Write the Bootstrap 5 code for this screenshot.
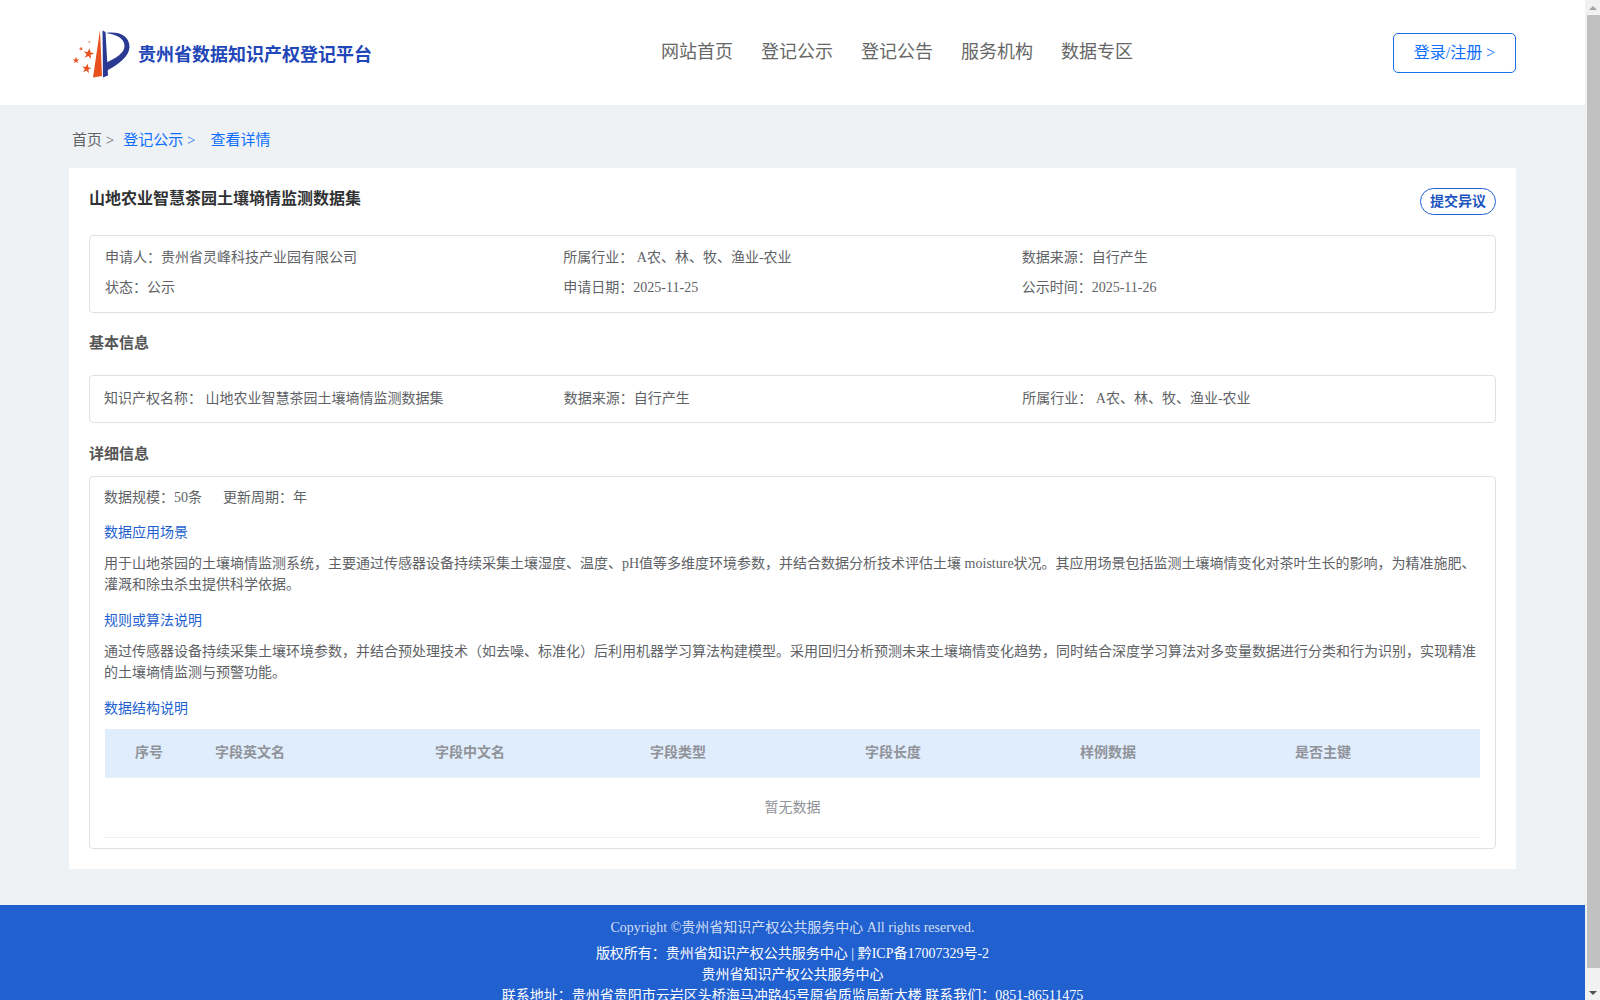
<!DOCTYPE html>
<html lang="zh-CN">
<head>
<meta charset="UTF-8" />
<title>贵州省数据知识产权登记平台</title>
<link href="https://cdn.jsdelivr.net/npm/bootstrap@5.3.3/dist/css/bootstrap.min.css" rel="stylesheet" />
<style>
  body {
    font-family: "Liberation Serif", "Noto Sans CJK SC", serif;
    font-size: 14px;
    color: #606266;
    background: #eff2f5;
    padding-right: 15px;
    height: 1000px;
    overflow: hidden;
  }
  .scroll-rail { position: fixed; top: 0; right: 0; bottom: 0; width: 15px; background: #f1f1f1; }
  .scroll-btn { height: 15px; }
  .scroll-up::before, .scroll-down::before { content: ""; border-left: 4px solid transparent; border-right: 4px solid transparent; }
  .scroll-up::before { border-bottom: 4px solid #a3a3a3; }
  .scroll-down::before { border-top: 4px solid #505050; }
  .scroll-thumb { height: 953px; margin-left: 2px; background: #c1c1c1; }
  .site-head { height: 105px; padding: 0 69px; background: #fff; }
  .site-logo { width: 595px; margin-left: -3px; }
  .site-logo span { margin-left: 2px; padding-top: 6px; font-size: 18px; font-weight: 700; color: #1f47b8; }
  .site-nav a { font-size: 18px; color: #666; text-decoration: none; line-height: 1; margin-top: -1px; }
  .site-nav { gap: 28px; }
  .login-btn {
    width: 123px; height: 40px; padding: 0;
    font-size: 16px; color: #0d6efd; background: #fff;
    border: 1px solid #1a6fe8; border-radius: 5px;
  }
  .page-wrap { padding: 0 69px 36px; }
  .crumbs { height: 63px; padding-left: 3px; padding-top: 7px; font-size: 15px; }
  .crumbs a { color: #0d6efd; text-decoration: none; }
  .crumbs .sep-a { margin-right: 9px; }
  .crumbs .sep-b { margin-right: 15px; }
  .detail-card { height: 701px; padding: 20px; background: #fff; }
  .detail-title { margin: 0; font-size: 16px; font-weight: 700; line-height: 22px; color: #303133; }
  .dispute-btn {
    width: 76px; height: 27px; padding: 0;
    font-size: 14px; font-weight: 700; color: #1d56c0; background: #fff;
    border: 1px solid #2060cf; border-radius: 14px;
  }
  .info-box { border: 1px solid #dfe1e5; border-radius: 4px; }
  .box-apply { height: 78px; margin-top: 20px; padding: 7px 15px; }
  .box-basic { height: 48px; padding: 8px 15px 8px 14px; }
  .box-basic .col-4 + .col-4 { padding-left: 1px; }
  .box-detail { height: 373px; padding: 9px 15px 0 14px; }
  .info-line { line-height: 30px; }
  .sect-title { margin: 0; font-size: 15px; font-weight: 700; color: #555; line-height: 22px; }
  .sect-basic { margin-top: 19px; margin-bottom: 21px; }
  .sect-detail { margin-top: 20px; margin-bottom: 11px; }
  .scale-line { line-height: 24px; }
  .scale-line span + span { margin-left: 21px; }
  .sub-title { margin: 0; font-size: 14px; font-weight: 400; line-height: 24px; color: #1d5fd0; }
  .sub-text { margin: 8px 0 14px; line-height: 21px; color: #606266; }
  .scale-line + .sub-title { margin-top: 11px; }
  .empty-table { margin: 8px 0 0 1px; table-layout: fixed; width: 1375px; }
  .empty-table th {
    width: 215px; height: 48px; padding: 0 0 0 25px; vertical-align: middle;
    font-size: 14px; font-weight: 700; color: #909399;
    background: #e0edfd; border-bottom: 1px solid #ebeef5;
  }
  .empty-table th:first-child { width: 85px; padding-left: 3px; text-align: center; }
  .empty-table th:nth-child(2) { width: 220px; }
  .empty-table th:last-child { width: 210px; }
  .empty-table td {
    height: 60px; padding: 0; text-align: center; vertical-align: middle;
    color: #909399; border-bottom: 1px solid #ebeef5;
  }
  .site-foot {
    margin-top: 0; padding: 12px 0 12px; background: #2160cf;
    color: #fff; text-align: center; line-height: 21px;
  }
  .site-foot .copy-line { margin-bottom: 5px; color: rgba(255, 255, 255, .8); }
</style>
</head>
<body>
  <header class="site-head d-flex align-items-center">
    <div class="site-logo d-flex align-items-center">
      <svg width="70" height="60" viewBox="0 0 70 60" aria-hidden="true">
        <defs>
          <path id="star" d="M0-1 .29-.31 .95-.31 .36.12 .59.81 0 .38-.59.81-.36.12-.95-.31-.29-.31Z" />
        </defs>
        <path d="M34 7 36 53 27 54.500Z" fill="#e8501e" />
        <path fill="#2a3a92" d="M36.500 7.500 39.500 9 42 52.500 37 54.500Z" />
        <path fill="#2a3a92" d="M40 10C52 8 63.500 12 63.500 24 63.500 33 52 42 41 47.500L40.500 39.500C50 35 58.500 30 58.500 23 58.500 15 50 11.500 40 10Z" />
        <g fill="#e8501e">
          <use href="#star" transform="translate(22.700 31) scale(5.500) rotate(10)" />
          <use href="#star" transform="translate(10 37.500) scale(3.500)" />
          <use href="#star" transform="translate(20.700 45.700) scale(5) rotate(10)" />
          <circle cx="15" cy="25.700" r="1.500" opacity=".8" />
          <circle cx="23.300" cy="19" r="1" opacity=".6" />
        </g>
      </svg>
      <span>贵州省数据知识产权登记平台</span>
    </div>
    <nav class="site-nav d-flex">
      <a href="#">网站首页</a>
      <a href="#">登记公示</a>
      <a href="#">登记公告</a>
      <a href="#">服务机构</a>
      <a href="#">数据专区</a>
    </nav>
    <button class="login-btn ms-auto" type="button">登录/注册 &gt;</button>
  </header>

  <main class="page-wrap">
    <div class="crumbs d-flex align-items-center">
      <span class="sep-a">首页 &gt;</span>
      <a class="sep-b" href="#">登记公示 &gt;</a>
      <a href="#">查看详情</a>
    </div>

    <section class="detail-card">
      <div class="d-flex justify-content-between align-items-start">
        <h1 class="detail-title">山地农业智慧茶园土壤墒情监测数据集</h1>
        <button class="dispute-btn" type="button">提交异议</button>
      </div>

      <div class="info-box box-apply">
        <div class="row g-0 info-line">
          <div class="col-4">申请人：贵州省灵峰科技产业园有限公司</div>
          <div class="col-4">所属行业： A农、林、牧、渔业-农业</div>
          <div class="col-4">数据来源：自行产生</div>
        </div>
        <div class="row g-0 info-line">
          <div class="col-4">状态：公示</div>
          <div class="col-4">申请日期：2025-11-25</div>
          <div class="col-4">公示时间：2025-11-26</div>
        </div>
      </div>

      <h2 class="sect-title sect-basic">基本信息</h2>
      <div class="info-box box-basic">
        <div class="row g-0 info-line">
          <div class="col-4">知识产权名称： 山地农业智慧茶园土壤墒情监测数据集</div>
          <div class="col-4">数据来源：自行产生</div>
          <div class="col-4">所属行业： A农、林、牧、渔业-农业</div>
        </div>
      </div>

      <h2 class="sect-title sect-detail">详细信息</h2>
      <div class="info-box box-detail">
        <div class="scale-line"><span>数据规模：50条</span><span>更新周期：年</span></div>
        <h3 class="sub-title">数据应用场景</h3>
        <p class="sub-text">用于山地茶园的土壤墒情监测系统，主要通过传感器设备持续采集土壤湿度、温度、pH值等多维度环境参数，并结合数据分析技术评估土壤 moisture状况。其应用场景包括监测土壤墒情变化对茶叶生长的影响，为精准施肥、灌溉和除虫杀虫提供科学依据。</p>
        <h3 class="sub-title">规则或算法说明</h3>
        <p class="sub-text">通过传感器设备持续采集土壤环境参数，并结合预处理技术（如去噪、标准化）后利用机器学习算法构建模型。采用回归分析预测未来土壤墒情变化趋势，同时结合深度学习算法对多变量数据进行分类和行为识别，实现精准的土壤墒情监测与预警功能。</p>
        <h3 class="sub-title">数据结构说明</h3>
        <table class="empty-table">
          <thead>
            <tr>
              <th>序号</th><th>字段英文名</th><th>字段中文名</th><th>字段类型</th><th>字段长度</th><th>样例数据</th><th>是否主键</th>
            </tr>
          </thead>
          <tbody>
            <tr><td colspan="7">暂无数据</td></tr>
          </tbody>
        </table>
      </div>
    </section>
  </main>

  <footer class="site-foot">
    <div class="copy-line">Copyright ©贵州省知识产权公共服务中心 All rights reserved.</div>
    <div>版权所有：贵州省知识产权公共服务中心 | 黔ICP备17007329号-2</div>
    <div>贵州省知识产权公共服务中心</div>
    <div>联系地址：贵州省贵阳市云岩区头桥海马冲路45号原省质监局新大楼 联系我们：0851-86511475</div>
  </footer>

  <aside class="scroll-rail" aria-hidden="true">
    <div class="scroll-btn scroll-up d-flex align-items-center justify-content-center"></div>
    <div class="scroll-thumb"></div>
    <div class="scroll-btn scroll-down position-absolute bottom-0 w-100 d-flex align-items-center justify-content-center"></div>
  </aside>

  <script src="https://cdn.jsdelivr.net/npm/bootstrap@5.3.3/dist/js/bootstrap.bundle.min.js"></script>
</body>
</html>
